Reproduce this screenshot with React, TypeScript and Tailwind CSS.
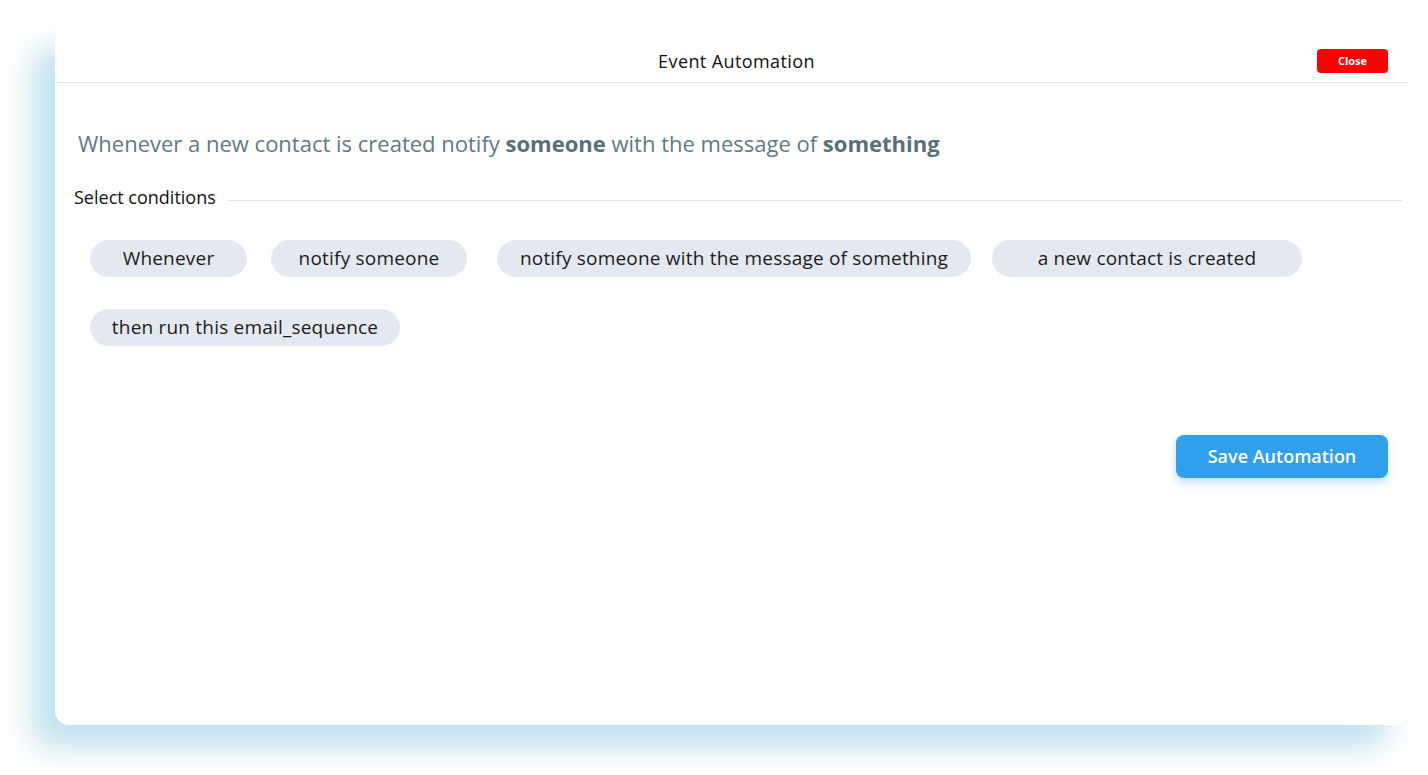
import React from "react";

const chips: { label: string; w: string; mr: string }[] = [
  { label: "Whenever", w: "w-[157px]", mr: "mr-[24px]" },
  { label: "notify someone", w: "w-[196px]", mr: "mr-[30px]" },
  { label: "notify someone with the message of something", w: "w-[474px]", mr: "mr-[21px]" },
  { label: "a new contact is created", w: "w-[310px]", mr: "mr-0" },
  { label: "then run this email_sequence", w: "w-[310px]", mr: "mr-0" },
];

export default function App() {
  return (
    <div className="w-[1428px] h-[775px] bg-white pt-[27px] pl-[55px] font-['Open_Sans',sans-serif]">
      <div className="w-[1353px] h-[698px] bg-white rounded-[14px] shadow-[-22px_22px_30px_0px_rgba(140,200,228,0.55)] flex flex-col">
        <div className="h-[56px] border-b border-[#e6e6e6] flex items-center justify-center relative">
          <span className="text-[18px] text-[#111] mt-[14px] tracking-[0.4px] ml-[10px]">Event Automation</span>
          <button className="absolute right-[20px] top-[22px] w-[71px] h-[24px] bg-[#ff0000] rounded-[4px] text-white text-[11px] font-bold flex items-center justify-center">
            Close
          </button>
        </div>
        <div className="pl-[23px] pt-[45px] text-[22px] text-[#5f7a85] leading-[30px] tracking-[0px]">
          Whenever a new contact is created notify <b className="font-bold text-[#587079]">someone</b> with the message of{" "}
          <b className="font-bold text-[#587079]">something</b>
        </div>
        <div className="flex items-center pl-[19px] pr-[6px] mt-[26px]">
          <span className="text-[18px] text-[#111] whitespace-nowrap">Select conditions</span>
          <div className="flex-1 h-px bg-[#e3e3e3] ml-[12px] mt-[5px]" />
        </div>
        <div className="flex flex-wrap pl-[35px] mt-[29px] gap-y-[32px] w-[1320px]">
          {chips.map((c) => (
            <div
              key={c.label}
              className={`${c.w} ${c.mr} h-[37px] rounded-full bg-[#e4e9f1] flex items-center justify-center text-[19px] text-[#1c1c1c] whitespace-nowrap tracking-[0.2px]`}
            >
              {c.label}
            </div>
          ))}
        </div>
        <div className="flex justify-end pr-[20px] mt-[89px]">
          <button className="w-[212px] h-[43px] rounded-[8px] bg-[#31a0ec] text-white text-[18px] font-semibold shadow-[0px_5px_8px_rgba(49,160,236,0.3)]">
            Save Automation
          </button>
        </div>
      </div>
    </div>
  );
}
